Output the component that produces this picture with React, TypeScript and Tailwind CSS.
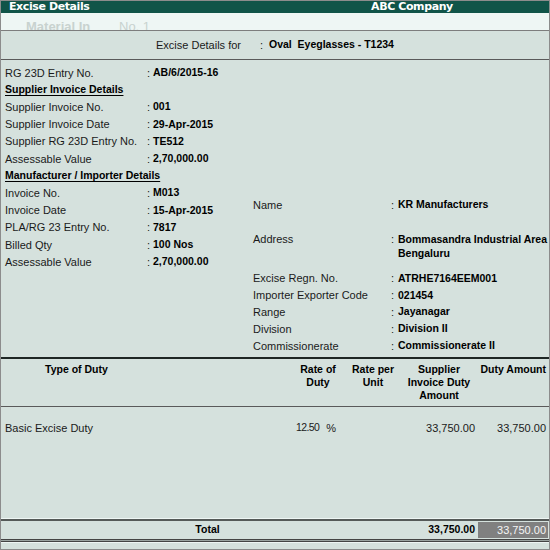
const FONT = { fontFamily: '"Liberation Sans", Arial, sans-serif' }

type Row = { label: string; value?: string; head?: boolean }

const leftRows: Row[] = [
  { label: 'RG 23D Entry No.', value: 'AB/6/2015-16' },
  { label: 'Supplier Invoice Details', head: true },
  { label: 'Supplier Invoice No.', value: '001' },
  { label: 'Supplier Invoice Date', value: '29-Apr-2015' },
  { label: 'Supplier RG 23D Entry No.', value: 'TE512' },
  { label: 'Assessable Value', value: '2,70,000.00' },
  { label: 'Manufacturer / Importer Details', head: true },
  { label: 'Invoice No.', value: 'M013' },
  { label: 'Invoice Date', value: '15-Apr-2015' },
  { label: 'PLA/RG 23 Entry No.', value: '7817' },
  { label: 'Billed Qty', value: '100 Nos' },
  { label: 'Assessable Value', value: '2,70,000.00' },
]

const rightRows: Row[] = [
  { label: 'Excise Regn. No.', value: 'ATRHE7164EEM001' },
  { label: 'Importer Exporter Code', value: '021454' },
  { label: 'Range', value: 'Jayanagar' },
  { label: 'Division', value: 'Division II' },
  { label: 'Commissionerate', value: 'Commissionerate II' },
]

function LeftRow({ row }: { row: Row }) {
  if (row.head) {
    return (
      <div className="flex h-[17.2px] items-center">
        <span className="text-[10.5px] font-bold text-black underline underline-offset-2">{row.label}</span>
      </div>
    )
  }
  return (
    <div className="flex h-[17.2px] items-center">
      <span className="w-[142px] shrink-0 text-[11px] text-[#1a1a1a]">{row.label}</span>
      <span className="w-[6px] shrink-0 text-[11px] text-[#1a1a1a]">:</span>
      <span className="text-[10.5px] font-bold text-black">{row.value}</span>
    </div>
  )
}

function RightRow({ row }: { row: Row }) {
  return (
    <div className="flex h-[16.9px] items-center">
      <span className="w-[138px] shrink-0 text-[11px] text-[#1a1a1a]">{row.label}</span>
      <span className="w-[7px] shrink-0 text-[11px] text-[#1a1a1a]">:</span>
      <span className="text-[10.5px] font-bold text-black whitespace-nowrap">{row.value}</span>
    </div>
  )
}

const cols = 'grid grid-cols-[289px_56px_54px_78px_70px]'

export default function App() {
  return (
    <div
      className="flex h-[550px] w-[550px] flex-col overflow-hidden border border-[#8c8c8c] bg-[#d5e1dd]"
      style={FONT}
    >
      {/* title bar */}
      <div className="grid h-[12px] grid-cols-2 bg-[#105448] text-[11px] font-bold leading-[12px] text-white" style={{ fontFamily: '"DejaVu Sans", Verdana, sans-serif' }}>
        <span className="pl-[8px] tracking-[-0.4px]">Excise Details</span>
        <span className="text-center tracking-[-0.4px]">ABC Company</span>
      </div>

      {/* faded voucher strip, partly hidden under the panel */}
      <div className="flex h-[17px] overflow-hidden bg-[#eef6f4] pl-[25px] pt-[7px] text-[13px] font-bold leading-[13px] text-[#c8d2cf]">
        <span className="w-[93px]">Material In</span>
        <span className="font-normal">No. 1</span>
      </div>
      <div className="h-px bg-[#7d7d7d]" />

      {/* stock item */}
      <div className="flex h-[28px] items-center pl-[155px] text-[11px] text-[#1a1a1a]">
        <span className="w-[104px]">Excise Details for</span>
        <span className="w-[9px]">:</span>
        <span className="text-[10.5px] font-bold text-black">Oval&nbsp; Eyeglasses - T1234</span>
      </div>
      <div className="h-px bg-[#5a5a5a]" />

      {/* details */}
      <div className="flex h-[297px]">
        <div className="w-[248px] shrink-0 pl-[4px] pt-[4.4px]">
          {leftRows.map((r, i) => (
            <LeftRow key={i} row={r} />
          ))}
        </div>
        <div className="flex-1 pl-[4px] pt-[136.4px]">
          <RightRow row={{ label: 'Name', value: 'KR Manufacturers' }} />
          <div className="mt-[18.4px] flex text-[11px] leading-[14px]">
            <span className="w-[138px] shrink-0 text-[#1a1a1a]">Address</span>
            <span className="w-[7px] shrink-0 text-[#1a1a1a]">:</span>
            <span className="whitespace-nowrap text-[10.5px] font-bold text-black">
              Bommasandra Industrial Area
              <br />
              Bengaluru
            </span>
          </div>
          <div className="mt-[10.4px]">
            {rightRows.map((r, i) => (
              <RightRow key={i} row={r} />
            ))}
          </div>
        </div>
      </div>
      <div className="h-[2px] bg-[#1e2624]" />

      {/* table header */}
      <div className={`${cols} h-[47px] pt-[3.8px] text-[10.5px] font-bold leading-[13.3px] text-black`}>
        <div className="pl-[44px]">Type of Duty</div>
        <div className="flex flex-col items-center">
          <span>Rate of</span>
          <span>Duty</span>
        </div>
        <div className="flex flex-col items-center">
          <span>Rate per</span>
          <span>Unit</span>
        </div>
        <div className="flex flex-col items-center whitespace-nowrap">
          <span>Supplier</span>
          <span>Invoice Duty</span>
          <span>Amount</span>
        </div>
        <div className="whitespace-nowrap pr-[2px] text-right">Duty Amount</div>
      </div>
      <div className="h-px bg-[#5a5a5a]" />

      {/* table body */}
      <div className="h-[111px] pt-[12.5px]">
        <div className={`${cols} h-[17px] items-center text-[11px] text-[#1a1a1a]`}>
          <div className="pl-[4px]">Basic Excise Duty</div>
          <div className="flex items-center justify-end gap-[7px] pr-[10px]">
            <span className="text-[10.5px] tracking-[-0.6px]">12.50</span>
            <span>%</span>
          </div>
          <div />
          <div className="pr-[3px] text-right">33,750.00</div>
          <div className="pr-[2px] text-right">33,750.00</div>
        </div>
      </div>

      {/* total */}
      <div className="h-px bg-[#eef6f4]" />
      <div className="h-[2px] bg-[#555a58]" />
      <div className={`${cols} h-[18px] items-center text-[10.5px] font-bold`}>
        <div className="col-span-3 pl-[14px] text-center text-black">Total</div>
        <div className="pr-[3px] text-right text-black">33,750.00</div>
        <div className="flex h-[16px] items-center justify-end bg-[#808080] pr-[2px] text-[11px] font-normal text-[#f4f4f4]">
          33,750.00
        </div>
      </div>
      <div className="h-px bg-[#444]" />
      <div className="h-px bg-[#9aa3a0]" />
      <div className="h-px bg-[#444]" />
      <div className="h-px bg-[#eef6f4]" />
      <div className="flex-1" />
    </div>
  )
}
